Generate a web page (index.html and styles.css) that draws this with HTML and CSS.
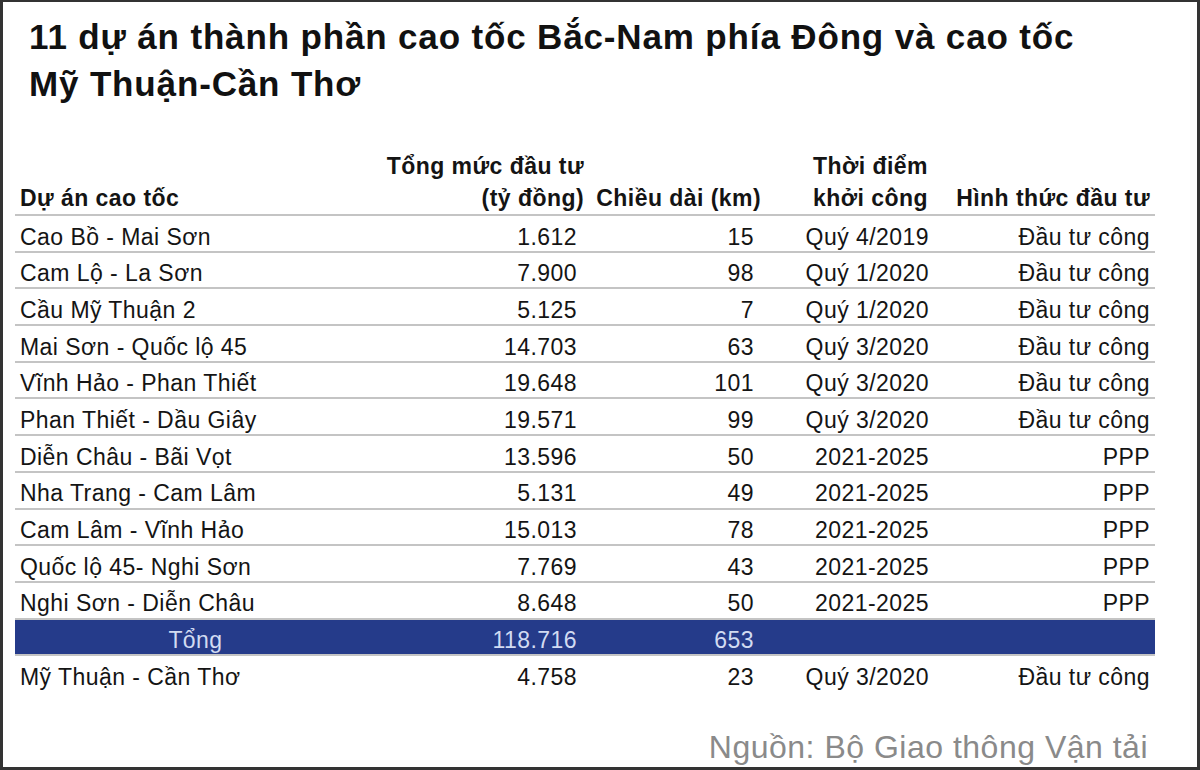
FILE: index.html
```html
<!DOCTYPE html>
<html lang="vi">
<head>
<meta charset="utf-8">
<title>11 dự án thành phần cao tốc Bắc-Nam phía Đông</title>
<link rel="stylesheet" href="styles.css">
</head>
<body>
<div class="frame">
  <h1 class="title">11 dự án thành phần cao tốc Bắc-Nam phía Đông và cao tốc<br>Mỹ Thuận-Cần Thơ</h1>
  <table class="data">
    <colgroup>
      <col class="c1"><col class="c2"><col class="c3"><col class="c4"><col class="c5">
    </colgroup>
    <thead>
      <tr>
        <th class="name">Dự án cao tốc</th>
        <th class="num h2">Tổng mức đầu tư<br>(tỷ đồng)</th>
        <th class="num h3">Chiều dài (km)</th>
        <th class="num h4">Thời điểm<br>khởi công</th>
        <th class="num h5">Hình thức đầu tư</th>
      </tr>
    </thead>
    <tbody>
      <tr><td class="name">Cao Bồ - Mai Sơn</td><td class="v2">1.612</td><td class="v3">15</td><td class="v4">Quý 4/2019</td><td class="v5">Đầu tư công</td></tr>
      <tr><td class="name">Cam Lộ - La Sơn</td><td class="v2">7.900</td><td class="v3">98</td><td class="v4">Quý 1/2020</td><td class="v5">Đầu tư công</td></tr>
      <tr><td class="name">Cầu Mỹ Thuận 2</td><td class="v2">5.125</td><td class="v3">7</td><td class="v4">Quý 1/2020</td><td class="v5">Đầu tư công</td></tr>
      <tr><td class="name">Mai Sơn - Quốc lộ 45</td><td class="v2">14.703</td><td class="v3">63</td><td class="v4">Quý 3/2020</td><td class="v5">Đầu tư công</td></tr>
      <tr><td class="name">Vĩnh Hảo - Phan Thiết</td><td class="v2">19.648</td><td class="v3">101</td><td class="v4">Quý 3/2020</td><td class="v5">Đầu tư công</td></tr>
      <tr><td class="name">Phan Thiết - Dầu Giây</td><td class="v2">19.571</td><td class="v3">99</td><td class="v4">Quý 3/2020</td><td class="v5">Đầu tư công</td></tr>
      <tr><td class="name">Diễn Châu - Bãi Vọt</td><td class="v2">13.596</td><td class="v3">50</td><td class="v4">2021-2025</td><td class="v5">PPP</td></tr>
      <tr><td class="name">Nha Trang - Cam Lâm</td><td class="v2">5.131</td><td class="v3">49</td><td class="v4">2021-2025</td><td class="v5">PPP</td></tr>
      <tr><td class="name">Cam Lâm - Vĩnh Hảo</td><td class="v2">15.013</td><td class="v3">78</td><td class="v4">2021-2025</td><td class="v5">PPP</td></tr>
      <tr><td class="name">Quốc lộ 45- Nghi Sơn</td><td class="v2">7.769</td><td class="v3">43</td><td class="v4">2021-2025</td><td class="v5">PPP</td></tr>
      <tr><td class="name">Nghi Sơn - Diễn Châu</td><td class="v2">8.648</td><td class="v3">50</td><td class="v4">2021-2025</td><td class="v5">PPP</td></tr>
      <tr class="total"><td class="total-label">Tổng</td><td class="v2">118.716</td><td class="v3">653</td><td class="v4"></td><td class="v5"></td></tr>
      <tr class="last"><td class="name">Mỹ Thuận - Cần Thơ</td><td class="v2">4.758</td><td class="v3">23</td><td class="v4">Quý 3/2020</td><td class="v5">Đầu tư công</td></tr>
    </tbody>
  </table>
  <p class="source">Nguồn: Bộ Giao thông Vận tải</p>
</div>
</body>
</html>
```

FILE: styles.css
```css
* { box-sizing: border-box; }
html, body { margin: 0; padding: 0; background: #fff; }
body { font-family: "Liberation Sans", Arial, sans-serif; color: #141414; }

.frame {
  width: 1200px;
  height: 770px;
  border: 3px solid #333;
  border-top-width: 2px;
  padding: 0 42px 0 12px;
  overflow: hidden;
}

.title {
  margin: 0;
  padding: 11px 0 0 14px;
  font-size: 35px;
  font-weight: bold;
  line-height: 47px;
  color: #111;
  letter-spacing: 0.85px;
}

.data {
  margin-top: 43px;
  width: 1140px;
  border-collapse: collapse;
  font-size: 23px;
  letter-spacing: 0.45px;
  table-layout: fixed;
}
.c1 { width: 365px; }
.c2 { width: 205px; }
.c3 { width: 177px; }
.c4 { width: 173px; }
.c5 { width: 220px; }

.data th {
  font-weight: bold;
  line-height: 32px;
  vertical-align: bottom;
  padding: 0;
  border-bottom: 2px solid #c4c4c4;
  white-space: nowrap;
}
.data th.name { text-align: left; padding-left: 5px; }
.data th.num { text-align: right; }
.data th.h2 { padding-right: 1px; }
.data th.h3 { padding-right: 1px; }
.data th.h4 { padding-right: 7px; }
.data th.h5 { padding-right: 5px; }

.data td {
  height: 36.7px;
  padding: 7.5px 0 0 0;
  line-height: 26px;
  vertical-align: top;
  border-bottom: 2px solid #c4c4c4;
  text-align: right;
  white-space: nowrap;
}
.data td.name { text-align: left; padding-left: 5px; }
.data td.v2 { padding-right: 8px; }
.data td.v3 { padding-right: 8px; }
.data td.v4 { padding-right: 6px; }
.data td.v5 { padding-right: 5px; }

.total td {
  background: #253b8a;
  color: #d2dbf2;
}
.data td.total-label { text-align: center; padding-right: 4px; }

.last td { border-bottom: none; }

.source {
  margin: 37px 0 0 0;
  text-align: right;
  padding-right: 7px;
  font-size: 32px;
  line-height: 36px;
  letter-spacing: 0.5px;
  color: #8a8a8a;
}
```
